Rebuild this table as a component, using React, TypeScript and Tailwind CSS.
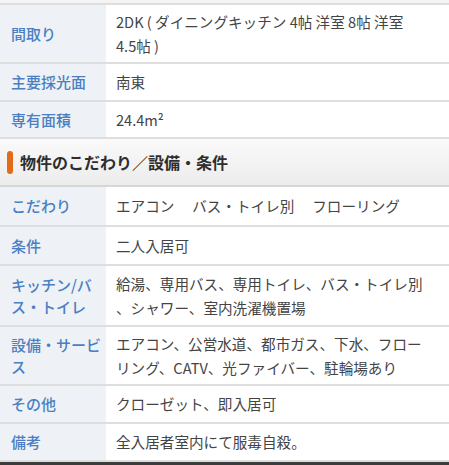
const font = { fontFamily: '"Noto Sans CJK JP", "Noto Sans", sans-serif' };

type Row = { label: string[]; value: string[]; h: string };

const topRows: Row[] = [
  { label: ["間取り"], value: ["2DK ( ダイニングキッチン 4帖 洋室 8帖 洋室", "4.5帖 )"], h: "h-[59px]" },
  { label: ["主要採光面"], value: ["南東"], h: "h-[38px]" },
  { label: ["専有面積"], value: ["24.4m²"], h: "h-[37px]" },
];

const bottomRows: Row[] = [
  { label: ["こだわり"], value: ["エアコン　 バス・トイレ別　 フローリング"], h: "h-[40px]" },
  { label: ["条件"], value: ["二人入居可"], h: "h-[39px]" },
  { label: ["キッチン/バ", "ス・トイレ"], value: ["給湯、専用バス、専用トイレ、バス・トイレ別", "、シャワー、室内洗濯機置場"], h: "h-[61px]" },
  { label: ["設備・サービ", "ス"], value: ["エアコン、公営水道、都市ガス、下水、フロー", "リング、CATV、光ファイバー、駐輪場あり"], h: "h-[59px]" },
  { label: ["その他"], value: ["クローゼット、即入居可"], h: "h-[38px]" },
  { label: ["備考"], value: ["全入居者室内にて服毒自殺。"], h: "h-[38px]" },
];

function TableRow({ row }: { row: Row }) {
  return (
    <div className={`flex border-b-2 border-[#dedede] ${row.h}`}>
      <div className="flex w-[106px] shrink-0 flex-col justify-center bg-[#eef2f6] pl-[11px] text-[15px] leading-[22px] font-medium text-[#4a7fc2]">
        {row.label.map((l) => (
          <span key={l} className="whitespace-nowrap">{l}</span>
        ))}
      </div>
      <div className="flex flex-1 flex-col justify-center bg-white pl-[10px] text-[14.6px] leading-[24px] text-[#444]">
        {row.value.map((v) => (
          <span key={v} className="whitespace-pre">{v}</span>
        ))}
      </div>
    </div>
  );
}

export default function App() {
  return (
    <div className="h-[465px] w-[449px] overflow-hidden bg-white" style={font}>
      <div className="h-[3px] bg-[#f4f4f4]" />
      <div className="border-t-2 border-[#dedede]">
        {topRows.map((r) => (
          <TableRow key={r.label[0]} row={r} />
        ))}
      </div>
      <div className="flex h-[48px] items-center gap-[7px] border-b-2 border-[#d6d6d6] bg-gradient-to-b from-[#fafafa] to-[#ececec] pl-[7px]">
        <div className="h-[23px] w-[6px] rounded-[3px] bg-[#e36b17]" />
        <h2 className="text-[16px] font-bold text-[#2e2e2e]">物件のこだわり／設備・条件</h2>
      </div>
      {bottomRows.map((r) => (
        <TableRow key={r.label[0]} row={r} />
      ))}
      <div className="h-[4px] bg-[#3c3c3c]" />
    </div>
  );
}
